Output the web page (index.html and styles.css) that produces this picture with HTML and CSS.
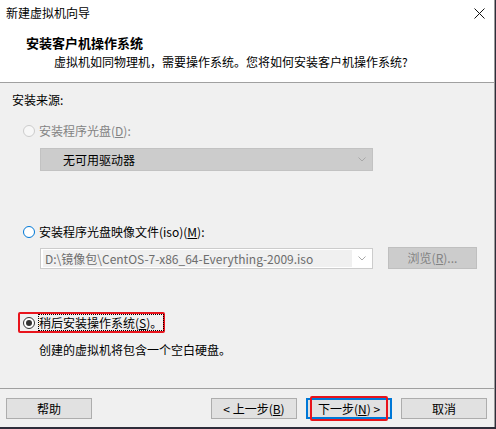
FILE: index.html
```html
<!DOCTYPE html>
<html lang="zh-CN">
<head>
<meta charset="utf-8">
<title>新建虚拟机向导</title>
<link rel="stylesheet" href="styles.css">
</head>
<body>
<div class="window">
  <div class="titlebar">
    <span class="title">新建虚拟机向导</span>
    <svg class="close" width="11" height="11" viewBox="0 0 11 11"><path d="M0.5 0.5L10.5 10.5M10.5 0.5L0.5 10.5" stroke="#111" stroke-width="1"/></svg>
  </div>
  <div class="header">
    <div class="h-title">安装客户机操作系统</div>
    <div class="h-sub">虚拟机如同物理机，需要操作系统。您将如何安装客户机操作系统?</div>
  </div>
  <div class="content">
    <div class="label">安装来源:</div>
    <div class="radio-row disabled r1"><span class="radio"></span><span>安装程序光盘(<u>D</u>):</span></div>
    <div class="combo c1">
      <span class="combo-text">无可用驱动器</span>
      <svg class="chev" width="8" height="5" viewBox="0 0 8 5"><path d="M0.5 0.5L4 4L7.5 0.5" fill="none" stroke="#a8a8a8" stroke-width="1"/></svg>
    </div>
    <div class="radio-row r2"><span class="radio focus"></span><span>安装程序光盘映像文件(iso)(<u>M</u>):</span></div>
    <div class="iso-row">
      <div class="combo iso">
        <span class="field">D:\镜像包\CentOS-7-x86_64-Everything-2009.iso</span>
        <svg class="chev" width="8" height="5" viewBox="0 0 8 5"><path d="M0.5 0.5L4 4L7.5 0.5" fill="none" stroke="#a8a8a8" stroke-width="1"/></svg>
      </div>
      <div class="browse">浏览(<u>R</u>)...</div>
    </div>
    <div class="marked">
      <div class="radio-row r3"><span class="radio checked"></span><span class="focus-text">稍后安装操作系统(<u>S</u>)。</span></div>
    </div>
    <div class="desc">创建的虚拟机将包含一个空白硬盘。</div>
  </div>
  <div class="footer">
    <div class="btn">帮助</div>
    <div class="spacer"></div>
    <div class="btn">&lt; 上一步(<u>B</u>)</div>
    <div class="btn default">下一步(<u>N</u>) &gt;<span class="mark"></span></div>
    <div class="btn">取消</div>
  </div>
</div>
</body>
</html>
```

FILE: styles.css
```css
* { box-sizing: border-box; }
html, body { margin: 0; padding: 0; }
body {
  width: 496px;
  height: 429px;
  background: #2e2d3a;
  font-family: "Noto Sans CJK SC", "Noto Sans", sans-serif;
  font-size: 12px;
  color: #000;
  overflow: hidden;
}
u { text-decoration: underline; text-underline-offset: 1px; }

.window {
  width: 495px;
  height: 427px;
  background: #f0f0f0;
  border-right: 1px solid #9a9a9a;
  display: flex;
  flex-direction: column;
}

.titlebar {
  height: 26px;
  background: #fff;
  display: flex;
  align-items: center;
  padding-left: 6px;
  padding-right: 9px;
}
.title { flex: 1; line-height: 26px; }
.close { display: block; }

.header {
  background: #fff;
  padding: 9px 0 12px 0;
  border-bottom: 1px solid #a0a0a0;
}
.h-title {
  padding-left: 26px;
  font-size: 13px;
  font-weight: bold;
  line-height: 16px;
}
.h-sub {
  padding-left: 54px;
  margin-top: 3px;
  line-height: 16px;
}

.content {
  flex: 1;
  padding: 9px 0 0 12px;
  display: flex;
  flex-direction: column;
  align-items: flex-start;
}
.label { line-height: 16px; }

.radio-row {
  display: flex;
  align-items: center;
  line-height: 16px;
  height: 16px;
  margin-left: 11px;
}
.radio {
  width: 12px;
  height: 12px;
  border-radius: 50%;
  border: 1px solid #333;
  background: #fff;
  margin-right: 4px;
  flex: none;
  position: relative;
}
.radio.focus { border-color: #0078d7; }
.radio.checked::after {
  content: "";
  position: absolute;
  left: 2px;
  top: 2px;
  width: 6px;
  height: 6px;
  border-radius: 50%;
  background: #333;
}
.disabled { color: #838383; }
.disabled .radio { border-color: #cccccc; background: #f7f7f7; }

.r1 { margin-top: 15px; }

.combo {
  width: 333px;
  display: flex;
  align-items: center;
  margin-left: 28px;
}
.c1 {
  margin-top: 9px;
  height: 23px;
  background: #cccccc;
  border: 1px solid #c2c2c2;
  padding-left: 22px;
}
.combo-text { flex: 1; line-height: 16px; }
.chev { display: block; margin-right: 6px; flex: none; }

.r2 { margin-top: 53px; }

.iso-row {
  margin-top: 7px;
  display: flex;
  align-items: flex-start;
}
.iso {
  margin-top: 1px;
  height: 21px;
  background: #fff;
  border: 1px solid #cccccc;
  padding-left: 2px;
}
.field {
  width: 311px;
  height: 17px;
  background: #f0f0f0;
  color: #6d6d6d;
  padding-left: 2px;
  line-height: 17px;
  margin-right: 6px;
  white-space: nowrap;
  overflow: hidden;
}
.browse {
  margin-left: 15px;
  width: 89px;
  height: 22px;
  background: #cccccc;
  border: 1px solid #bfbfbf;
  color: #838383;
  text-align: center;
  line-height: 20px;
}

.marked {
  margin-top: 43px;
  margin-left: 6px;
  border: 2px solid #e8141c;
  border-radius: 2px;
  padding: 0 0 0 3px;
  height: 21px;
  display: flex;
  align-items: center;
}
.marked .radio-row { margin-left: 0; }
.focus-text {
  outline: 1px dotted #000;
  outline-offset: 0;
  padding-right: 1px;
  line-height: 15px;
}

.desc {
  margin-top: 9px;
  margin-left: 27px;
  line-height: 16px;
}

.footer {
  height: 39px;
  border-top: 1px solid #a0a0a0;
  padding: 9px 7px 0 6px;
  display: flex;
  align-items: flex-start;
}
.spacer { flex: 1; }
.btn {
  width: 86px;
  height: 21px;
  background: #e1e1e1;
  border: 1px solid #adadad;
  text-align: center;
  line-height: 19px;
  position: relative;
}
.btn + .btn { margin-left: 9px; }
.btn.default { border: 2px solid #0078d7; line-height: 17px; }
.mark {
  position: absolute;
  left: 2px;
  top: -4px;
  width: 78px;
  height: 25px;
  border: 2px solid #e8141c;
  border-radius: 2px;
}
```
